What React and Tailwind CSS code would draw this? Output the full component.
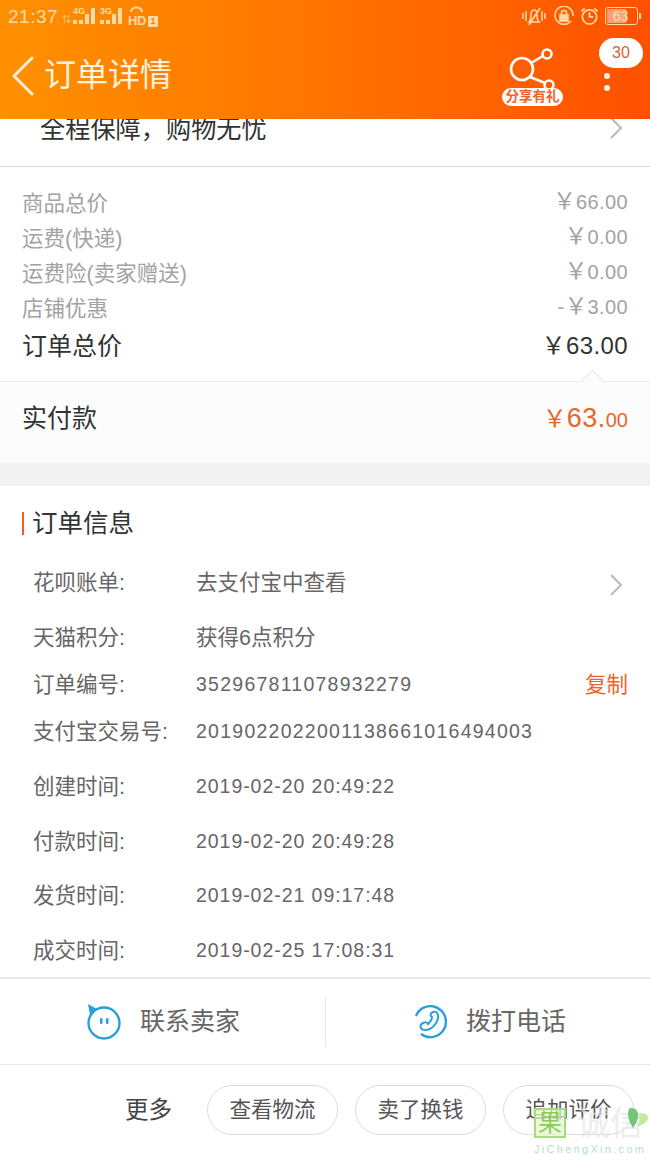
const cjk = { fontFamily: '"Liberation Sans","Noto Sans CJK SC",sans-serif' };

function Signal({ label }) {
  return (
    <span className="relative flex items-end gap-[2px] h-[16px] w-[22px]">
      <span className="absolute left-0 top-[-1px] text-[9px] leading-[9px] font-bold text-[#ffd9a6]">{label}</span>
      <span className="w-[4px] h-[4px] bg-[#ffd9a6]" />
      <span className="w-[4px] h-[4px] bg-[#ffd9a6]" />
      <span className="w-[4px] h-[10px] bg-[#ffd9a6]" />
      <span className="w-[4px] h-[16px] bg-[#ffd9a6]" />
    </span>
  );
}

function StatusBar() {
  return (
    <div className="h-[32px] flex items-center justify-between pl-[8px] pr-[9px] text-[#ffd9a6]">
      <div className="flex items-center">
        <span className="text-[19px] leading-none tracking-[0.5px] w-[54px]">21:37</span>
        <span className="text-[9px] leading-none self-start mt-[8px] w-[11px]">⇅</span>
        <Signal label="4G" />
        <span className="w-[5px]" />
        <Signal label="3G" />
        <span className="w-[6px]" />
        <span className="relative w-[30px] h-[18px] font-bold">
          <svg className="absolute left-[1px] top-[-2px]" width="15" height="8" viewBox="0 0 15 8" fill="none" stroke="#ffd9a6" strokeWidth="2"><path d="M2 7C2 1 13 1 13 7" /></svg>
          <span className="absolute left-0 bottom-[-2px] text-[13px] leading-[13px] tracking-[-0.5px]">HD</span>
          <span className="absolute right-0 bottom-[-2px] w-[10px] h-[11px] bg-[#ffd9a6] text-[#ff8000] text-[9px] text-center rounded-[1px] leading-[11px]">1</span>
        </span>
      </div>
      <div className="flex items-center">
        <svg width="24" height="20" viewBox="0 0 24 20" fill="none" stroke="#ffd9a6" strokeWidth="1.6">
          <path d="M1 7v6M4 5v10M20 5v10M23 7v6" />
          <path d="M7 16c2-2 2-4 2-7s1-5 3-5 3 2 3 5 0 5 2 7zM18 2L7 19" />
        </svg>
        <svg className="ml-[8px]" width="20" height="20" viewBox="0 0 20 20" fill="none" stroke="#ffd9a6" strokeWidth="1.6">
          <path d="M17 15A9 9 0 1 1 19 10" />
          <rect x="6" y="9" width="8" height="6" fill="#ffd9a6" />
          <path d="M7.500 9V7a2.500 2.500 0 0 1 5 0v2" />
        </svg>
        <svg className="ml-[6px]" width="19" height="20" viewBox="0 0 20 20" fill="none" stroke="#ffd9a6" strokeWidth="1.8">
          <circle cx="10" cy="11" r="7.500" />
          <path d="M10 6v5h4M1.500 5L5 2M18.500 5L15 2" />
        </svg>
        <span className="ml-[6px] w-[33px] h-[18px] rounded-[3px] border border-[#ffd9a6] overflow-hidden flex p-[1px]">
          <span className="w-[70%] bg-[#ffa070] rounded-[2px]" />
        </span>
        <span className="absolute right-[13px] top-[8px] w-[33px] text-center text-[14px] leading-[16px] text-[#ffe2c4]">63</span>
        <span className="w-[2px] h-[6px] bg-[#ffd9a6] ml-[1px]" />
      </div>
    </div>
  );
}

function Header() {
  return (
    <div className="h-[119px] bg-gradient-to-r from-[#ff9000] to-[#ff5000] shrink-0 relative">
      <StatusBar />
      <div className="h-[87px] flex items-start pl-[12px] relative">
        <svg className="mt-[24px]" width="22" height="40" viewBox="0 0 22 40" fill="none" stroke="#fff0d8" strokeWidth="3" strokeLinecap="round" strokeLinejoin="round">
          <path d="M20 2L2 20L20 38" />
        </svg>
        <span className="ml-[10px] mt-[24px] text-[32px] leading-[38px] text-[#fff3e0]">订单详情</span>
        <div className="ml-auto w-[148px] flex">
          <div className="relative w-[92px] h-[74px]">
            <svg className="absolute left-[6px] top-[14px]" width="50" height="44" viewBox="0 0 50 44" fill="none" stroke="#fff" strokeWidth="2.600">
              <circle cx="14" cy="23" r="11" />
              <circle cx="39" cy="8" r="4.500" />
              <circle cx="41" cy="39" r="4.500" />
              <path d="M23 17L35 10M22 31L37 37" />
            </svg>
            <span className="absolute left-0 top-[56px] w-[61px] h-[18px] rounded-full bg-white text-[#f4602a] text-[13.500px] leading-[18px] text-center font-bold whitespace-nowrap">分享有礼</span>
          </div>
          <div className="w-[44px] flex flex-col items-center mt-[6px] ml-[5px]">
            <span className="w-[44px] h-[30px] rounded-full bg-white text-[#d9603a] text-[16px] leading-[30px] text-center shrink-0">30</span>
            <span className="w-[6px] h-[6px] rounded-full bg-[#fff3e0] mt-[5px] -ml-[29px]" />
            <span className="w-[6px] h-[6px] rounded-full bg-[#fff3e0] mt-[6px] -ml-[29px]" />
          </div>
        </div>
      </div>
    </div>
  );
}

function Chevron() {
  return (
    <svg width="14" height="22" viewBox="0 0 14 22" fill="none" stroke="#b8b8b8" strokeWidth="2">
      <path d="M2 1L12 11L2 21" />
    </svg>
  );
}

function Price({ sign = "", value, big }) {
  return (
    <span className={big ? "text-[24px] tracking-[0.4px] pb-[2px]" : "text-[20px] tracking-[0.4px] pb-[6px] flex items-baseline"}>
      {sign}<span className={big ? "" : "text-[23px] tracking-[0]"}>￥</span>{value}
    </span>
  );
}

function PriceRow({ label, sign, value }) {
  return (
    <div className="h-[35px] flex items-center justify-between text-[#a3a3a3] text-[21.500px]">
      <span>{label}</span>
      <Price sign={sign} value={value} />
    </div>
  );
}

function InfoRow({ label, value, h, right, kind = "num" }) {
  const valueClass =
    kind === "text"
      ? "text-[21.500px]"
      : kind === "date"
        ? "text-[19.500px] tracking-[0.95px]"
        : "text-[19.500px] tracking-[1.25px]";
  return (
    <div className="flex items-center" style={{ height: h }}>
      <span className="w-[163px] text-[21.500px] text-[#666] whitespace-nowrap">{label}</span>
      <span className={`text-[#666] ${valueClass}`}>{value}</span>
      {right && <span className="ml-auto">{right}</span>}
    </div>
  );
}

function Pill({ children, className = "" }) {
  return (
    <span className={`w-[131px] h-[50px] rounded-full border border-[#dcdcdc] text-[21.500px] leading-[48px] text-center text-[#555] shrink-0 ${className}`}>{children}</span>
  );
}

export default function App() {
  return (
    <div className="w-[650px] h-[1155px] overflow-hidden relative flex flex-col bg-white" style={cjk}>
      <Header />

      <div className="h-[48px] shrink-0 border-b border-[#d9d9d9] flex justify-between pl-[40px] pr-[27px] overflow-hidden">
        <span className="text-[25.200px] leading-[30px] -mt-[5px] text-[#333] whitespace-nowrap">全程保障，购物无忧</span>
        <span className="mt-[-2px]"><Chevron /></span>
      </div>

      <div className="h-[215px] shrink-0 pt-[20px] pl-[22px] pr-[22px] border-b border-[#ececec]">
        <PriceRow label="商品总价" value="66.00" />
        <PriceRow label="运费(快递)" value="0.00" />
        <PriceRow label="运费险(卖家赠送)" value="0.00" />
        <PriceRow label="店铺优惠" sign="-" value="3.00" />
        <div className="h-[40px] flex items-center justify-between text-[#333]">
          <span className="text-[25px]">订单总价</span>
          <Price value="63.00" big />
        </div>
      </div>

      <div className="h-[81px] shrink-0 bg-[#fcfcfc] relative flex items-center justify-between pl-[22px] pr-[22px] pb-[8px]">
        <span className="absolute right-[49px] top-[-9px] w-[17px] h-[17px] rotate-45 bg-[#fcfcfc] border-l border-t border-[#e6e6e6]" />
        <span className="text-[25px] text-[#333]">实付款</span>
        <span className="text-[#e8662e] flex items-baseline"><span className="text-[24px]">￥</span><span className="text-[27px] tracking-[0.5px]">63.</span><span className="text-[20px]">00</span></span>
      </div>

      <div className="h-[23px] shrink-0 bg-[#f2f2f2]" />

      <div className="h-[493px] shrink-0 pl-[33px] pr-[22px] border-b-2 border-[#e8e8e8] relative">
        <div className="h-[74px] flex items-center -ml-[11px]">
          <span className="w-[2px] h-[23px] bg-[#f4601c] mr-[8px]" />
          <span className="text-[25.500px] text-[#333]">订单信息</span>
        </div>
        <InfoRow label="花呗账单:" value="去支付宝中查看" h={46} kind="text" right={<span className="block mr-[5px] mt-[4px]"><Chevron /></span>} />
        <InfoRow label="天猫积分:" value="获得6点积分" h={65} kind="text" />
        <InfoRow label="订单编号:" value="352967811078932279" h={28} right={<span className="text-[21.500px] text-[#f0622a]">复制</span>} />
        <InfoRow label="支付宝交易号:" value="2019022022001138661016494003" h={66} />
        <InfoRow label="创建时间:" value="2019-02-20 20:49:22" h={44} kind="date" />
        <InfoRow label="付款时间:" value="2019-02-20 20:49:28" h={66} kind="date" />
        <InfoRow label="发货时间:" value="2019-02-21 09:17:48" h={42} kind="date" />
        <InfoRow label="成交时间:" value="2019-02-25 17:08:31" h={68} kind="date" />
      </div>

      <div className="h-[86px] shrink-0 border-b border-[#e8e8e8] flex items-center relative">
        <div className="w-[325px] flex items-center pl-[87px]">
          <svg width="34" height="36" viewBox="0 0 34 36" fill="none">
            <circle cx="17" cy="19" r="15.500" stroke="#2a9fdc" strokeWidth="2.400" />
            <path d="M1 0L10 5L3 11Z" fill="#2a9fdc" />
            <rect x="13" y="14" width="2.500" height="6" rx="1" fill="#2a9fdc" />
            <rect x="19" y="14" width="2.500" height="6" rx="1" fill="#2a9fdc" />
          </svg>
          <span className="ml-[19px] text-[25px] text-[#666]">联系卖家</span>
        </div>
        <div className="w-px h-[50px] bg-[#e8e8e8]" />
        <div className="flex-1 flex items-center pl-[87px]">
          <svg width="34" height="34" viewBox="0 0 34 34" fill="none" stroke="#2a9fdc" strokeWidth="2.400">
            <path d="M8 29A15.500 15.500 0 1 0 3 11" />
            <path d="M20 7c3-1 4 0 5 3 1 5-3 11-8 14-3 1-8 2-9-1-1-2 0-4 2-5 2-1 4-1 5 1 2-2 4-4 4-7-2-1-2-4 1-5z" strokeWidth="2" />
          </svg>
          <span className="ml-[19px] text-[25px] text-[#666]">拨打电话</span>
        </div>
      </div>

      <div className="flex-1 flex items-start pl-[125px] pt-[20px]">
        <span className="text-[23.500px] leading-[50px] text-[#444] w-[82px]">更多</span>
        <Pill>查看物流</Pill>
        <Pill className="ml-[17px]">卖了换钱</Pill>
        <Pill className="ml-[17px]">追加评价</Pill>
      </div>

      <div className="absolute left-[534px] top-[1108px] w-[116px] h-[47px] pointer-events-none">
        <div className="flex items-start">
          <span className="w-[32px] h-[30px] border-2 border-[#a8dc78] bg-[#e4f6cf]/70 text-[#8ccb58] text-[24px] leading-[25px] text-center">果</span>
          <span className="ml-[11px] text-[33px] leading-[32px] text-[#e6e6e6]/70 whitespace-nowrap">诚信</span>
          <svg className="absolute right-[2px] top-0" width="20" height="22" viewBox="0 0 20 22">
            <path d="M3 0C9 0 11 5 10 10 9 14 7 17 5 20 2 15 0 11 0 6 0 3 1 0 3 0Z" fill="#74c47a" />
            <path d="M11 6C15 4 20 6 20 10 20 14 14 17 9 19 11 14 12 10 11 6Z" fill="#c5e89a" />
          </svg>
        </div>
        <div className="mt-[3px] text-[11px] leading-[12px] tracking-[2.300px] text-[#b5dfc8] whitespace-nowrap">JiChengXin.com</div>
      </div>
    </div>
  );
}
